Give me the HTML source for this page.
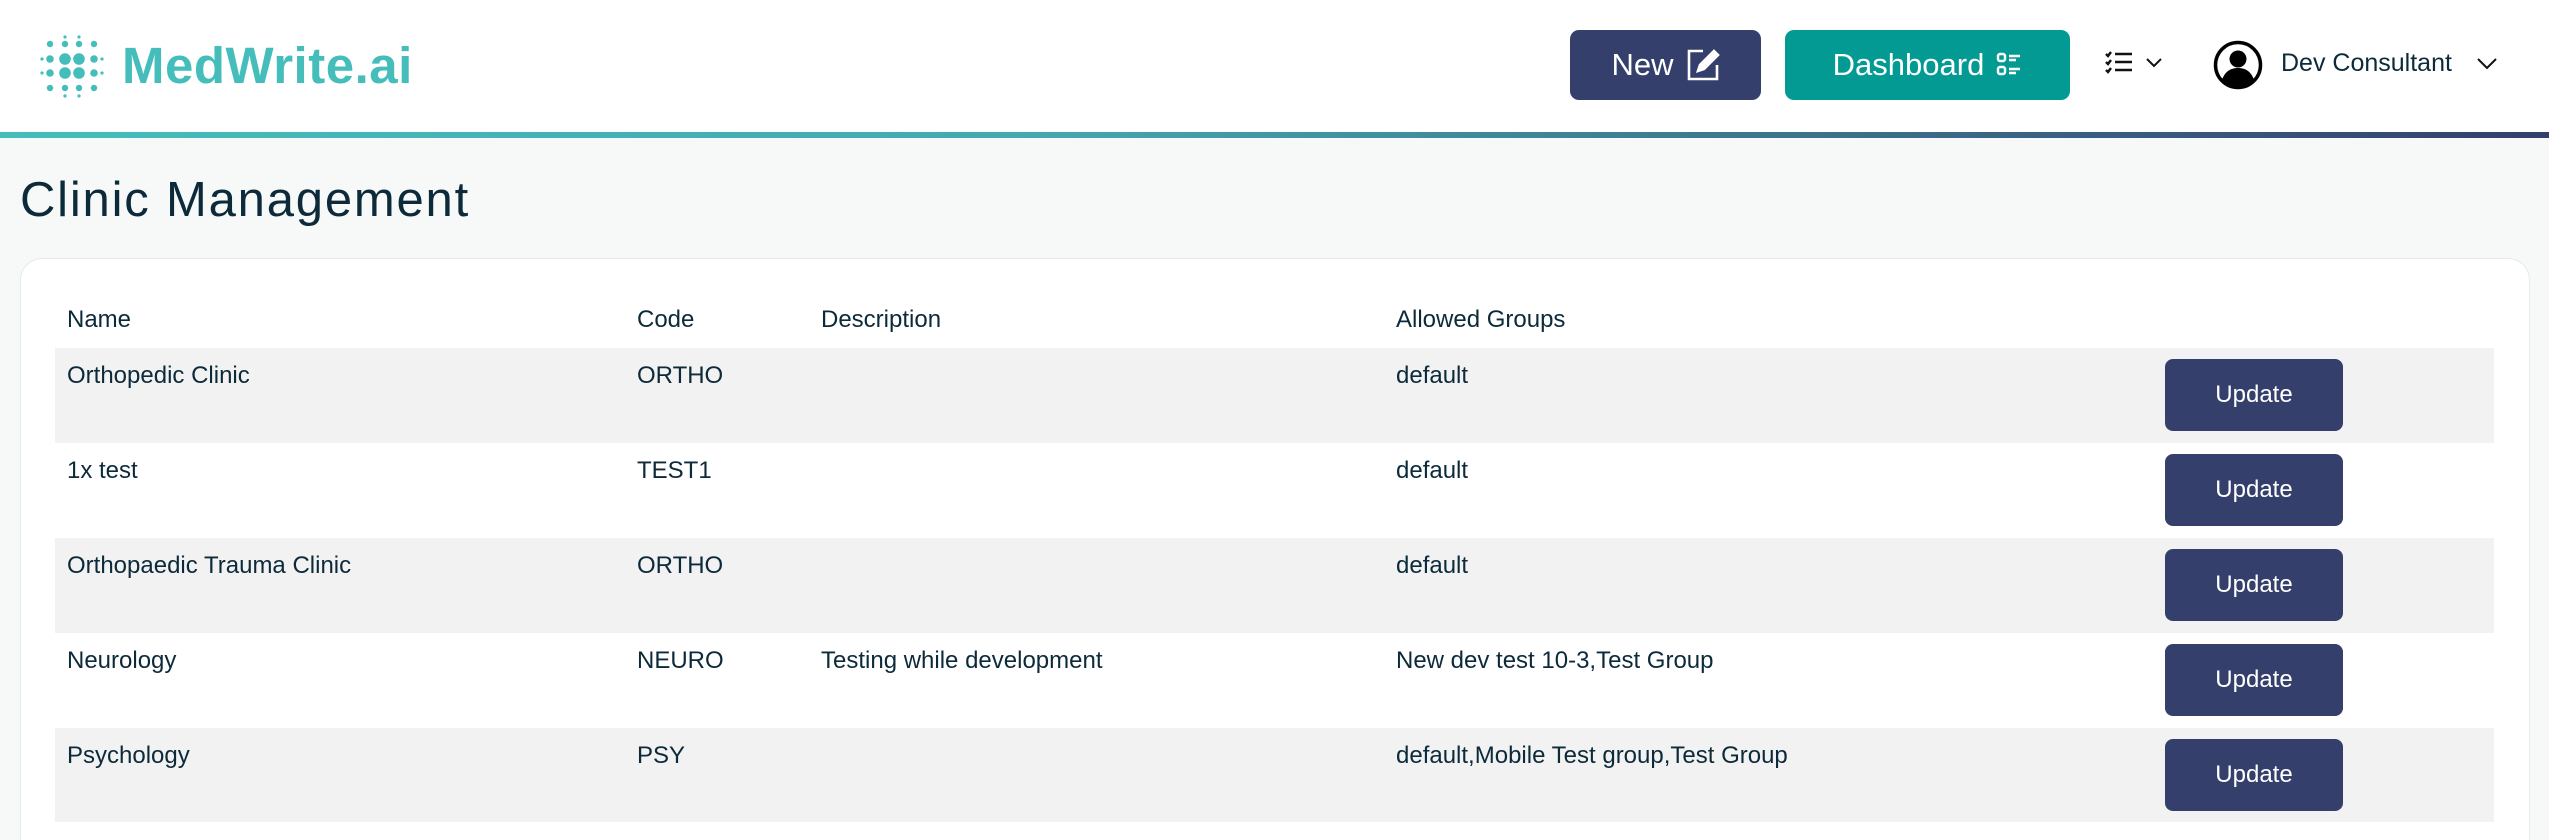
<!DOCTYPE html>
<html style="width:2549px;height:840px;overflow:hidden"><head><meta charset="utf-8"><style>
*{margin:0;padding:0;box-sizing:border-box}
body{width:2549px;height:840px;overflow:hidden;background:#f7f9f9;font-family:"Liberation Sans",sans-serif;color:#0c2a3a;position:relative}
#wrap{position:absolute;left:0;top:0;width:2549px;height:840px;overflow:hidden}
.hdr{position:absolute;left:0;top:0;width:2549px;height:132px;background:#fff}
.bar{position:absolute;left:0;top:132px;width:2549px;height:6px;background:linear-gradient(90deg,#45bdbb 0%,#44a9b0 40%,#343f6b 100%)}
.logo{position:absolute;left:122px;top:36px;font-size:51px;font-weight:bold;color:#45bdbb;letter-spacing:0.5px}
.btn{position:absolute;top:30px;height:70px;border-radius:9px;color:#fff;font-size:31px;display:flex;align-items:center;justify-content:center;gap:12px}
h1{position:absolute;left:20px;top:172px;font-size:49px;font-weight:normal;letter-spacing:1.8px;color:#0c2a3a}
.card{position:absolute;left:20px;top:258px;width:2510px;height:582px;background:#fff;border:1px solid #e6ebeb;border-bottom:none;border-radius:22px 22px 0 0}
.row{position:absolute;left:55px;width:2439px;height:95px}
.row.g{background:#f2f2f2}
.c{position:absolute;font-size:24px;top:14px}
.upd{position:absolute;left:2110px;top:11px;width:178px;height:72px;background:#343f6b;border-radius:8px;color:#fff;font-size:24px;display:flex;align-items:center;justify-content:center}
</style></head><body><div id="wrap">
<div class="hdr"></div>
<svg style="position:absolute;left:0;top:0" width="120" height="132">
<g fill="#45bdbb">
<circle cx="50" cy="44" r="3.2"/><circle cx="65" cy="44" r="3.2"/><circle cx="79" cy="44" r="3.2"/><circle cx="94" cy="44" r="3.2"/>
<circle cx="50" cy="59" r="3.8"/><circle cx="65" cy="59" r="5.8"/><circle cx="79" cy="59" r="5.8"/><circle cx="94" cy="59" r="3.8"/>
<circle cx="50" cy="73" r="3.8"/><circle cx="65" cy="73" r="5.8"/><circle cx="79" cy="73" r="5.8"/><circle cx="94" cy="73" r="3.8"/>
<circle cx="50" cy="88" r="3.2"/><circle cx="65" cy="88" r="3.2"/><circle cx="79" cy="88" r="3.2"/><circle cx="94" cy="88" r="3.2"/>
<circle cx="65" cy="37" r="1.6"/><circle cx="79" cy="37" r="1.6"/><circle cx="65" cy="96" r="1.6"/><circle cx="79" cy="96" r="1.6"/>
<circle cx="42" cy="59" r="1.6"/><circle cx="42" cy="73" r="1.6"/><circle cx="102" cy="59" r="1.6"/><circle cx="102" cy="73" r="1.6"/>
</g></svg>
<div class="logo">MedWrite.ai</div>
<div class="btn" style="left:1570px;width:191px;background:#343f6b">New
<svg width="34" height="34" viewBox="0 0 34 34" fill="none" stroke="#fff" stroke-width="2.6"><path d="M17 3H3v28h28V17"/><path d="M28 3l4 4-14 14-6 2 2-6z" fill="#fff"/></svg></div>
<div class="btn" style="left:1785px;width:285px;background:#049a94">Dashboard
<svg width="26" height="26" viewBox="0 0 26 26" fill="none" stroke="#fff" stroke-width="2.4"><rect x="2" y="2" width="7" height="7" rx="2"/><rect x="2" y="15" width="7" height="7" rx="2"/><path d="M13 4h11M13 8h7M13 17h11M13 21h7"/></svg></div>
<svg style="position:absolute;left:2105px;top:50px" width="64" height="26" viewBox="0 0 64 26" fill="none" stroke="#111" stroke-width="2.4"><path d="M1 4l2 2 3-4M1 12l2 2 3-4M1 20l2 2 3-4M10 4h17M10 12h17M10 20h17"/><path d="M42 9l7 7 7-7" stroke-width="2"/></svg>
<svg style="position:absolute;left:2213px;top:40px" width="50" height="50" viewBox="0 0 50 50"><circle cx="25" cy="25" r="22.5" fill="#fff" stroke="#000" stroke-width="3.5"/><circle cx="25" cy="19" r="8.5" fill="#000"/><path d="M9 40c3-9 9-12 16-12s13 3 16 12c-4 4-10 6-16 6s-12-2-16-6z" fill="#000"/></svg>
<div style="position:absolute;left:2281px;top:49px;font-size:25px;color:#0c2a3a">Dev Consultant</div>
<svg style="position:absolute;left:2476px;top:56px" width="22" height="14" viewBox="0 0 22 14" fill="none" stroke="#111" stroke-width="2"><path d="M2 3l9 9 9-9"/></svg>
<div class="bar"></div>
<h1>Clinic Management</h1>
<div class="card"></div>
<div class="row" style="top:300px"><div class="c" style="left:12px;top:6px">Name</div><div class="c" style="left:582px;top:6px">Code</div><div class="c" style="left:766px;top:6px">Description</div><div class="c" style="left:1341px;top:6px">Allowed Groups</div></div>
<div class="row g" style="top:348px"><div class="c" style="left:12px">Orthopedic Clinic</div><div class="c" style="left:582px">ORTHO</div><div class="c" style="left:1341px">default</div><div class="upd">Update</div></div>
<div class="row" style="top:443px"><div class="c" style="left:12px">1x test</div><div class="c" style="left:582px">TEST1</div><div class="c" style="left:1341px">default</div><div class="upd">Update</div></div>
<div class="row g" style="top:538px"><div class="c" style="left:12px">Orthopaedic Trauma Clinic</div><div class="c" style="left:582px">ORTHO</div><div class="c" style="left:1341px">default</div><div class="upd">Update</div></div>
<div class="row" style="top:633px"><div class="c" style="left:12px">Neurology</div><div class="c" style="left:582px">NEURO</div><div class="c" style="left:766px">Testing while development</div><div class="c" style="left:1341px">New dev test 10-3,Test Group</div><div class="upd">Update</div></div>
<div class="row g" style="top:728px;height:94px"><div class="c" style="left:12px">Psychology</div><div class="c" style="left:582px">PSY</div><div class="c" style="left:1341px">default,Mobile Test group,Test Group</div><div class="upd">Update</div></div>
</div></body></html>
